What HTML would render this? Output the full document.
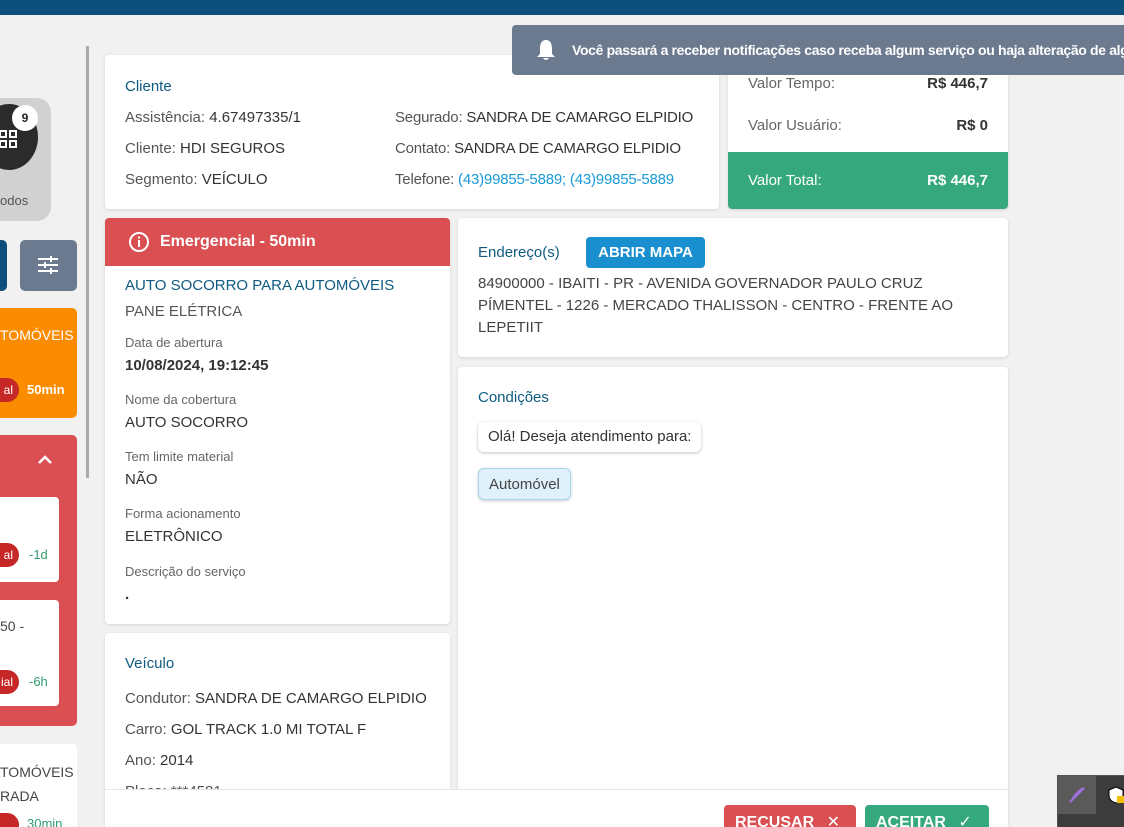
<!DOCTYPE html>
<html style="overflow:hidden;width:1124px;height:827px"><head><meta charset="utf-8"><style>
*{box-sizing:border-box;margin:0;padding:0}
body{width:1124px;height:827px;overflow:hidden;background:#f1f1f1;font-family:"Liberation Sans",sans-serif;font-size:15px;color:#444;position:relative}
.a{position:absolute}
.card{position:absolute;background:#fff;border-radius:4px;box-shadow:0 1px 3px rgba(0,0,0,.12)}
.t{color:#0f5a80;font-size:15px}
.lbl{color:#666;font-size:13px}
.val{color:#333;font-weight:bold;font-size:15px}
.link{color:#1a9ad6}
</style></head><body>
<div class="a" style="left:0;top:0;width:1124px;height:15px;background:#0c4f7c"></div>
<div class="a" style="left:86px;top:46px;width:3px;height:432px;background:#aaa"></div>

<div class="a" style="left:-20px;top:98px;width:71px;height:123px;background:#d1d1d1;border-radius:14px"></div>
<div class="a" style="left:-20px;top:104px;width:58px;height:66px;background:#2b2b2b;border-radius:50%"></div>
<svg class="a" style="left:0;top:130px" width="20" height="20"><g fill="none" stroke="#fff" stroke-width="2"><rect x="0" y="1" width="6" height="6"/><rect x="10" y="1" width="6" height="6"/><rect x="0" y="11" width="6" height="6"/><rect x="10" y="11" width="6" height="6"/></g></svg>
<div class="a" style="left:12px;top:105px;width:26px;height:26px;background:#fff;border-radius:50%;text-align:center;line-height:26px;font-size:12px;font-weight:bold;color:#222">9</div>
<div class="a" style="left:0;top:193px;font-size:13px;color:#555">odos</div>
<div class="a" style="left:-10px;top:240px;width:17px;height:51px;background:#0c4f7c;border-radius:5px"></div>
<div class="a" style="left:20px;top:240px;width:57px;height:51px;background:#6b7a8f;border-radius:5px"></div>
<svg class="a" style="left:37px;top:254px" width="22" height="22"><g stroke="#fff" stroke-width="2"><line x1="1" y1="5" x2="21" y2="5"/><line x1="1" y1="11" x2="21" y2="11"/><line x1="1" y1="17" x2="21" y2="17"/><line x1="14" y1="2" x2="14" y2="8"/><line x1="8" y1="8" x2="8" y2="14"/><line x1="14" y1="14" x2="14" y2="20"/></g></svg>
<div class="a" style="left:-10px;top:308px;width:87px;height:110px;background:#fb8c00;border-radius:5px"></div>
<div class="a" style="left:0;top:327px;color:#fff;font-size:14px">TOMÓVEIS</div>
<div class="a" style="left:-20px;top:378px;width:39px;height:24px;background:#c62828;border-radius:12px;color:#fff;font-size:12px;line-height:24px;text-align:right;padding-right:6px">al</div>
<div class="a" style="left:27px;top:382px;color:#fff;font-size:13px;font-weight:bold">50min</div>
<div class="a" style="left:-10px;top:435px;width:87px;height:291px;background:#d94f52;border-radius:5px"></div>
<svg class="a" style="left:38px;top:455px" width="14" height="10"><path d="M1 8 L7 2 L13 8" fill="none" stroke="#fff" stroke-width="2.5"/></svg>
<div class="a" style="left:-10px;top:497px;width:69px;height:85px;background:#fff;border-radius:4px"></div>
<div class="a" style="left:-20px;top:543px;width:39px;height:24px;background:#c62828;border-radius:12px;color:#fff;font-size:12px;line-height:24px;text-align:right;padding-right:6px">al</div>
<div class="a" style="left:29px;top:547px;color:#2e9c6e;font-size:13px">-1d</div>
<div class="a" style="left:-10px;top:600px;width:69px;height:106px;background:#fff;border-radius:4px"></div>
<div class="a" style="left:0;top:618px;font-size:14px;color:#444">50 -</div>
<div class="a" style="left:-20px;top:670px;width:39px;height:24px;background:#c62828;border-radius:12px;color:#fff;font-size:12px;line-height:24px;text-align:right;padding-right:6px">ial</div>
<div class="a" style="left:29px;top:674px;color:#2e9c6e;font-size:13px">-6h</div>
<div class="a" style="left:-10px;top:744px;width:87px;height:90px;background:#fff;border-radius:4px"></div>
<div class="a" style="left:0;top:760px;font-size:14px;color:#444;line-height:24px">TOMÓVEIS<br>RADA</div>
<div class="a" style="left:-20px;top:813px;width:39px;height:24px;background:#c62828;border-radius:12px"></div>
<div class="a" style="left:27px;top:816px;color:#2e9c6e;font-size:13px">30min</div>

<div class="card" style="left:105px;top:55px;width:614px;height:154px"></div>
<div class="a t" style="left:125px;top:78px">Cliente</div>
<div class="a" style="left:125px;top:102px;line-height:31px;font-size:15px;color:#555">Assistência: <span style="color:#333">4.67497335/1</span><br>Cliente: <span style="color:#333">HDI SEGUROS</span><br>Segmento: <span style="color:#333">VEÍCULO</span></div>
<div class="a" style="left:395px;top:102px;line-height:31px;font-size:15px;color:#555;white-space:nowrap;letter-spacing:-.2px">Segurado: <span style="color:#333">SANDRA DE CAMARGO ELPIDIO</span><br>Contato: <span style="color:#333">SANDRA DE CAMARGO ELPIDIO</span><br>Telefone: <span class="link">(43)99855-5889; (43)99855-5889</span></div>

<div class="card" style="left:728px;top:55px;width:280px;height:154px;overflow:hidden">
<div class="a" style="left:20px;top:20px;color:#666">Valor Tempo:</div>
<div class="a" style="right:20px;top:20px;font-weight:bold;color:#333">R$ 446,7</div>
<div class="a" style="left:20px;top:62px;color:#666">Valor Usuário:</div>
<div class="a" style="right:20px;top:62px;font-weight:bold;color:#333">R$ 0</div>
<div class="a" style="left:0;top:97px;width:280px;height:57px;background:#35a97d"></div>
<div class="a" style="left:20px;top:117px;color:#fff">Valor Total:</div>
<div class="a" style="right:20px;top:117px;font-weight:bold;color:#fff">R$ 446,7</div>
</div>

<div class="a" style="left:512px;top:25px;width:620px;height:50px;background:#6b7a8f;border-radius:4px;color:#fff;font-size:14px;white-space:nowrap;overflow:hidden">
<svg class="a" style="left:24px;top:14px" width="20" height="22"><path d="M10 1 C5 1 4 6 4 10 L4 15 L1 18 L19 18 L16 15 L16 10 C16 6 15 1 10 1Z M7 19 Q10 23 13 19Z" fill="#fff"/></svg>
<div class="a" style="left:60px;top:17px;font-weight:bold;letter-spacing:-.35px">Você passará a receber notificações caso receba algum serviço ou haja alteração de alg</div>
</div>

<div class="card" style="left:105px;top:218px;width:345px;height:406px;overflow:hidden">
<div class="a" style="left:0;top:0;width:345px;height:48px;background:#d94f52"></div>
<svg class="a" style="left:23px;top:13px" width="22" height="22"><circle cx="11" cy="11" r="9" fill="none" stroke="#fff" stroke-width="2"/><rect x="10" y="9" width="2" height="7" fill="#fff"/><rect x="10" y="5.5" width="2" height="2" fill="#fff"/></svg>
<div class="a" style="left:55px;top:15px;color:#fff;font-weight:bold;font-size:16px">Emergencial - 50min</div>
<div class="a t" style="left:20px;top:59px;font-size:15px">AUTO SOCORRO PARA AUTOMÓVEIS</div>
<div class="a" style="left:20px;top:85px;color:#555">PANE ELÉTRICA</div>
<div class="a lbl" style="left:20px;top:117px">Data de abertura</div>
<div class="a val" style="left:20px;top:139px">10/08/2024, 19:12:45</div>
<div class="a lbl" style="left:20px;top:174px">Nome da cobertura</div>
<div class="a val" style="left:20px;top:196px;font-weight:normal;color:#333">AUTO SOCORRO</div>
<div class="a lbl" style="left:20px;top:231px">Tem limite material</div>
<div class="a val" style="left:20px;top:253px;font-weight:normal;color:#333">NÃO</div>
<div class="a lbl" style="left:20px;top:288px">Forma acionamento</div>
<div class="a val" style="left:20px;top:310px;font-weight:normal;color:#333">ELETRÔNICO</div>
<div class="a lbl" style="left:20px;top:346px">Descrição do serviço</div>
<div class="a val" style="left:20px;top:368px">.</div>
</div>

<div class="card" style="left:458px;top:218px;width:550px;height:139px">
<div class="a t" style="left:20px;top:26px">Endereço(s)</div>
<div class="a" style="left:128px;top:19px;width:119px;height:31px;background:#1a8fd0;border-radius:4px;color:#fff;font-weight:bold;font-size:15px;text-align:center;line-height:31px">ABRIR MAPA</div>
<div class="a" style="left:20px;top:55px;width:480px;line-height:22px;font-size:15px;color:#444">84900000 - IBAITI - PR - AVENIDA GOVERNADOR PAULO CRUZ PÍMENTEL - 1226 - MERCADO THALISSON - CENTRO - FRENTE AO LEPETIIT</div>
</div>

<div class="card" style="left:458px;top:367px;width:550px;height:460px">
<div class="a t" style="left:20px;top:22px">Condições</div>
<div class="a" style="left:20px;top:55px;height:30px;padding:0 10px;line-height:30px;background:#fff;border-radius:6px;box-shadow:0 1px 3px rgba(0,0,0,.25);color:#333">Olá! Deseja atendimento para:</div>
<div class="a" style="left:20px;top:101px;height:32px;padding:0 10px;line-height:32px;background:#dff1fa;border:1px solid #a9d4ea;border-radius:6px;box-shadow:0 1px 3px rgba(0,0,0,.2);color:#444">Automóvel</div>
</div>

<div class="card" style="left:105px;top:633px;width:345px;height:194px;overflow:hidden">
<div class="a t" style="left:20px;top:22px">Veículo</div>
<div class="a" style="left:20px;top:50px;line-height:31px;color:#555;white-space:nowrap">Condutor: <span style="color:#333">SANDRA DE CAMARGO ELPIDIO</span><br>Carro: <span style="color:#333">GOL TRACK 1.0 MI TOTAL F</span><br>Ano: <span style="color:#333">2014</span><br>Placa: ***4581</div>
</div>

<div class="a" style="left:105px;top:789px;width:903px;height:38px;background:#fff;border-top:1px solid #e6e6e6"></div>
<div class="a" style="left:724px;top:805px;width:132px;height:30px;background:#d94f52;border-radius:4px;color:#fff;font-weight:bold;font-size:16px;padding:7px 0 0 11px">RECUSAR <span style="font-weight:normal;margin-left:8px">✕</span></div>
<div class="a" style="left:865px;top:805px;width:124px;height:30px;background:#35a97d;border-radius:4px;color:#fff;font-weight:bold;font-size:16px;padding:7px 0 0 11px">ACEITAR <span style="font-weight:normal;margin-left:8px">✓</span></div>

<div class="a" style="left:1057px;top:775px;width:70px;height:55px;background:#3c3c3c;border:1px solid #555"></div>
<div class="a" style="left:1058px;top:776px;width:38px;height:38px;background:#5a5a5a"></div>
<svg class="a" style="left:1068px;top:786px" width="18" height="18"><path d="M2 16 L16 2 M4 14 Q10 4 16 2" stroke="#a070e0" stroke-width="2" fill="none"/></svg>
<svg class="a" style="left:1108px;top:786px" width="16" height="18"><path d="M8 1 L15 4 L15 9 Q15 15 8 17 Q1 15 1 9 L1 4Z" fill="#fff" stroke="#000"/><rect x="9" y="10" width="7" height="7" fill="#f0c000"/></svg>
</body></html>
